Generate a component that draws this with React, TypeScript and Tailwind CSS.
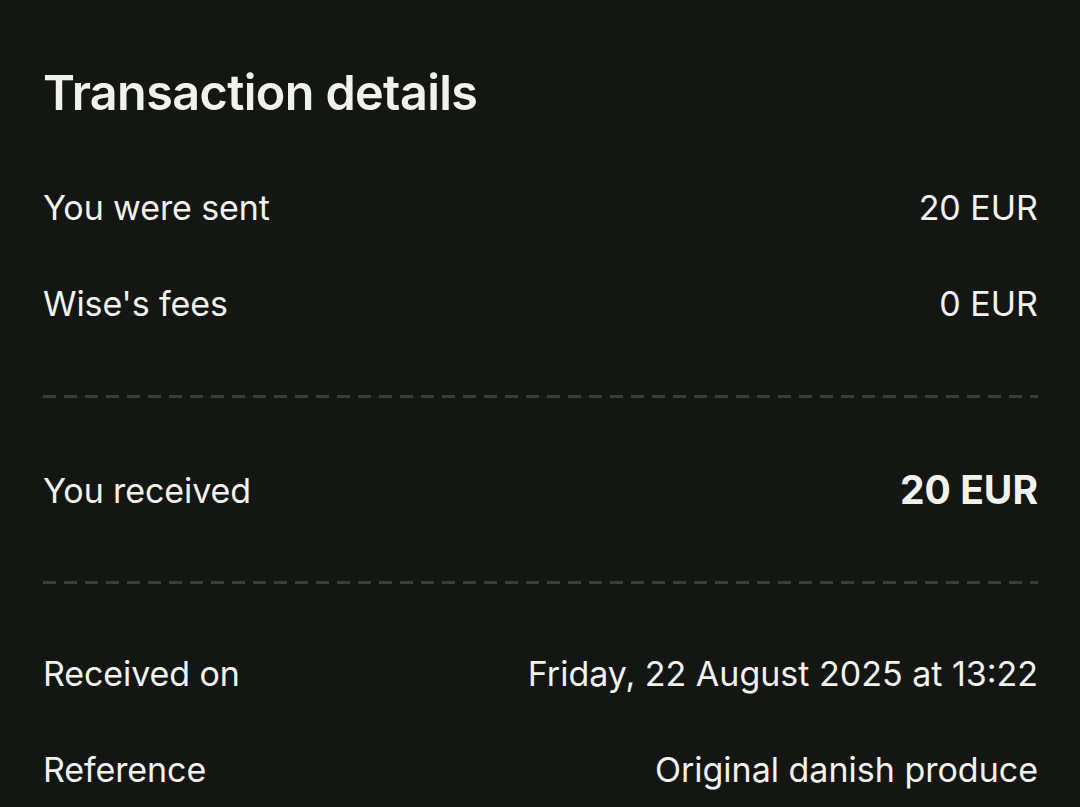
const ROWS_TOP = [
  { label: "You were sent", value: "20 EUR" },
  { label: "Wise's fees", value: "0 EUR" },
];

const ROWS_BOTTOM = [
  { label: "Received on", value: "Friday, 22 August 2025 at 13:22" },
  { label: "Reference", value: "Original danish produce" },
];

function Row({ label, value, strong }: { label: string; value: string; strong?: boolean }) {
  return (
    <div className="flex h-[96px] items-center justify-between gap-6">
      <span className="text-[34px] tracking-[-0.1px] text-[#f1f2ee]">{label}</span>
      <span className={strong ? "text-[39px] font-bold text-[#f1f2ee]" : "text-[34px] text-[#f1f2ee]"}>{value}</span>
    </div>
  );
}

function Dashes({ tight }: { tight?: boolean }) {
  return (
    <div
      className={
        tight
          ? "mt-[43px] mb-[41px] h-[3px] bg-[repeating-linear-gradient(to_right,#3b3d3a_0_13px,transparent_13px_21px)]"
          : "my-[44px] h-[3px] bg-[repeating-linear-gradient(to_right,#3b3d3a_0_13px,transparent_13px_21px)]"
      }
    />
  );
}

export default function App() {
  return (
    <div className="h-[807px] w-[1080px] overflow-hidden bg-[#141614] pl-[43px] pr-[42px] pt-[64px] font-['Inter',sans-serif] antialiased">
      <h1 className="mb-[37px] text-[48.5px] font-semibold leading-[58px] tracking-[-0.6px] text-[#f1f2ee]">
        Transaction details
      </h1>
      {ROWS_TOP.map((r) => (
        <Row key={r.label} {...r} />
      ))}
      <Dashes />
      <Row label="You received" value="20 EUR" strong />
      <Dashes tight />
      {ROWS_BOTTOM.map((r) => (
        <Row key={r.label} {...r} />
      ))}
    </div>
  );
}
